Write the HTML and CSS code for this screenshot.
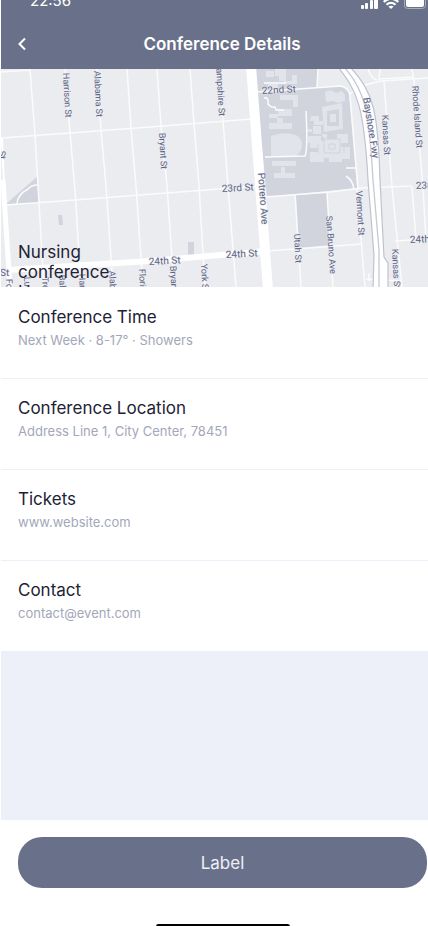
FILE: index.html
```html
<!DOCTYPE html>
<html lang="en">
<head>
<meta charset="utf-8">
<meta name="viewport" content="width=device-width, initial-scale=1">
<title>Conference Details</title>
<link rel="stylesheet" href="styles.css">
</head>
<body>
<div class="screen">
  <header class="header">
    <div class="status">
      <span class="clock">22:56</span>
      <svg class="indicators" width="68" height="14" viewBox="0 0 68 14" aria-hidden="true">
        <g fill="#fff">
          <rect x="1" y="9" width="3" height="4" rx="1"/>
          <rect x="5" y="7" width="3" height="6" rx="1"/>
          <rect x="10" y="4" width="3" height="9" rx="1"/>
          <rect x="14" y="1" width="4" height="12" rx="1"/>
          <path d="M23 5.200Q31-2 39 5.200L37.500 6.700Q31 1 24.500 6.700ZM25.700 7.900Q31 3.500 36.300 7.900L34.700 9.500Q31 6.600 27.300 9.500ZM28.400 10.600Q31 8.700 33.600 10.600L31 13Z"/>
          <rect x="46" y="2" width="18" height="9" rx="2"/>
        </g>
        <rect x="44.500" y="0.500" width="21" height="12" rx="3" fill="none" stroke="#a9aebd"/>
      </svg>
    </div>
    <div class="nav">
      <button class="back" type="button" aria-label="Back">
        <svg width="10" height="14" viewBox="0 0 10 14" fill="none" stroke="#fff" stroke-width="2"><path d="M8 1.500L2.500 7L8 12.500"/></svg>
      </button>
      <h1 class="title">Conference Details</h1>
    </div>
  </header>

  <section class="map">
    <svg class="streets" viewBox="1 69 427 218" preserveAspectRatio="xMidYMid slice" aria-label="Street map">
      <rect x="1" y="69" width="427" height="218" fill="#ebecf0"/>
      <g fill="#d1d4dd">
        <path d="M254 69H318L317 88L342 86L349 92L357 188L267 197Z"/>
        <path d="M296 195L327 193L330 245L299 248Z"/>
        <path d="M6 204L38 176V203Z"/>
        <path d="M58 215h4l1 10h-4ZM188 242h6v13h-6Z"/>
      </g>
      <g fill="#e1e4ea">
        <path d="M266 71h8v6h-8ZM275 69h11v12h-7v-5h-4ZM292 75h5v9h-13v-3h8ZM268 84h10v4h-10ZM280 95h18v12h-5v-7h-13ZM278 109h14v7h-14ZM269 114h9v4h-9ZM269 123h23v6h-23ZM277 118h6v5h-6ZM271 136Q284 131 296 135Q302 138 302 145Q302 153 295 156H271ZM272 161h24v5h-24ZM274 173h21v5h-21ZM281 167h4v6h-4Z"/>
        <path d="M325 92l6-2 5 3 6-2 3 4v6l-7 2-5-2-7 1Z"/>
        <path fill-rule="evenodd" d="M322 107L342 103L343 129L324 132ZM327 111V126H339V109Z"/>
        <path d="M330 114h6v8h-6ZM311 116h8v5h4v4h-9v-4h-4ZM307 129h5v3h-5ZM313 126h8v8h-8ZM308 136h13v7h-13ZM322 134h5v5h10v-5h11v9h-7v4h9v12h-8v3h-13v-4h-5v4h-14v-10h8v-4h-8v-7h14v-4h-2Z"/>
      </g>
      <g fill="none" stroke="#d1d4dd">
        <path d="M324 139h16v14h-16ZM329 144h6v5h-6ZM318 144v9M344 144v9"/>
      </g>
      <g fill="none" stroke="#fbfbfc" stroke-width="1.500">
        <path d="M1 72L30 70M30 69L35 135L44 287M65 69L70 132L75 190L81 287M97 69L101 130L106 186L113 287M127 69L131 128L136 186L143 287M157 69L161 126L167 186L174 287M190 69L194 124L199 186L205 287M220 69L223 120L228 186L236 287"/>
        <path d="M1 138L70 133L150 127L252 119M6 205L75 200L140 195L258 186M265 197L330 192L362 188L412 186M268 251L362 244M395 241L412 240"/>
        <path d="M295 195L301 287M327 193L333 287M357 188L365 287M318 69L317 87M256 92L341 86Q349 88 350 96L358 188M350 94Q356 89 365 85L381 81L428 78M368 69Q372 80 377 80M380 69L379 79L414 77M384 81L392 187L402 287M412 69L414 80L423 188L426 240M412 187L416 240M366 279L401 281M369 281V273M346 168h10M346 176Q353 180 354 190"/>
        <path d="M265 157L305 156Q308 150 306 111M264 98Q269 97 268 104Q271 108 275 107L276 110H284M264 83H286M17 204Q17 195 28 189Q31 185 38 185"/>
      </g>
      <g fill="none" stroke="#fff">
        <path d="M3 180L10 287" stroke-width="5"/>
        <path d="M2 138L4 185" stroke-width="2"/>
        <path d="M8 270L150 261L267 251" stroke-width="6"/>
        <path d="M251 66L260 185L268 290" stroke-width="10"/>
      </g>
      <path d="M338 67C357 91 364 105 368 180L374 255L373 290H388V263L384 257L380 180C378 111 374 93 350 67Z" fill="#fff" stroke="#bfc3cf" stroke-width="1.200"/>
      <path d="M345 68C365 91 369 110 373 180L379 250V290" fill="none" stroke="#c5c9d5" stroke-width="1.300"/>
      <g class="street-names">
        <text transform="translate(262 94) rotate(-3)">22nd St</text>
        <text transform="translate(222 192) rotate(-3)">23rd St</text>
        <text transform="translate(149 265) rotate(-3)">24th St</text>
        <text transform="translate(226 258) rotate(-3)">24th St</text>
        <text transform="translate(258 173) rotate(86)">Potrero Ave</text>
        <text transform="translate(363 98) rotate(81)">Bayshore Fwy</text>
        <text transform="translate(416 189) rotate(-2)">23rd St</text>
        <text transform="translate(410 243) rotate(-2)">24th St</text>
        <text transform="translate(0 276)">St</text>
      </g>
      <g class="street-names minor">
        <text transform="translate(63 73) rotate(87)">Harrison St</text>
        <text transform="translate(94 71) rotate(87)">Alabama St</text>
        <text transform="translate(159 133) rotate(87)">Bryant St</text>
        <text transform="translate(216 62) rotate(87)">Hampshire St</text>
        <text transform="translate(382 115) rotate(87)">Kansas St</text>
        <text transform="translate(412 86) rotate(86)">Rhode Island St</text>
        <text transform="translate(356 191) rotate(87)">Vermont St</text>
        <text transform="translate(326 216) rotate(86)">San Bruno Ave</text>
        <text transform="translate(294 234) rotate(87)">Utah St</text>
        <text transform="translate(392 249) rotate(87)">Kansas St</text>
        <text transform="translate(-1 151) rotate(87)">St</text>
        <text transform="translate(6 279) rotate(87)">Folsom St</text>
        <text transform="translate(24 277) rotate(87)">Lucky St</text>
        <text transform="translate(42 277) rotate(87)">Treat Ave</text>
        <text transform="translate(59 275) rotate(87)">Balmy St</text>
        <text transform="translate(79 274) rotate(87)">Harrison St</text>
        <text transform="translate(109 271) rotate(87)">Alabama St</text>
        <text transform="translate(139 269) rotate(87)">Florida St</text>
        <text transform="translate(170 266) rotate(87)">Bryant St</text>
        <text transform="translate(201 264) rotate(87)">York St</text>
      </g>
    </svg>
    <p class="place">Nursing<br>conference<br>Ho</p>
  </section>

  <main class="details">
    <section class="item"><h2>Conference Time</h2><p>Next Week · 8-17° · Showers</p></section>
    <section class="item"><h2>Conference Location</h2><p>Address Line 1, City Center, 78451</p></section>
    <section class="item"><h2>Tickets</h2><p>www.website.com</p></section>
    <section class="item"><h2>Contact</h2><p>contact@event.com</p></section>
  </main>

  <footer class="footer">
    <button class="action" type="button">Label</button>
    <div class="home"></div>
  </footer>
</div>
</body>
</html>
```
FILE: styles.css
```css
* { box-sizing: border-box; }
body { margin: 0; background: #fff; font-family: Inter, sans-serif; color: #1e2236; }
h1, h2, p { margin: 0; font-weight: 400; }
button { border: 0; font: inherit; color: #fff; }
.screen { display: flex; flex-direction: column; height: 100vh; min-height: 720px; margin-left: 1px; overflow: hidden; background: #edf0f9; }
.header { flex: none; background: #697089; color: #fff; overflow: hidden; }
.status { display: flex; justify-content: space-between; align-items: flex-end; height: 20px; margin-top: -10px; padding-left: 29px; }
.clock { font-size: 15px; line-height: 18px; }
.indicators { flex: none; }
.nav { display: grid; grid-template-columns: 42px 1fr 27px; align-items: center; height: 59px; padding-bottom: 10px; padding-top: 18px; }
.back { display: flex; justify-content: center; padding: 8px; background: transparent; }
.title { text-align: center; font-size: 17px; line-height: 24px; font-weight: 600; }
.map { flex: none; position: relative; height: 218px; overflow: hidden; }
.streets { display: block; width: 100%; height: 100%; }
.street-names { font-family: Roboto, sans-serif; font-size: 10px; fill: #5d6585; stroke: #ebecf0; stroke-width: 1px; paint-order: stroke; text-rendering: geometricPrecision; }
.minor { font-size: 9px; }
.place { position: absolute; left: 17px; top: 173px; font-size: 17px; line-height: 20px; }
.details { flex: none; padding-top: 1px; background: #fff; }
.item { height: 91px; padding: 17px 17px 0; border-bottom: 1px solid #edf0f9; }
.item h2 { font-size: 17px; line-height: 24px; }
.item p { margin-top: 1px; font-size: 13px; line-height: 20px; color: #a3a7b9; }
.footer { display: flex; flex-direction: column; flex: none; height: 106px; margin-top: auto; padding: 17px 1px 0 17px; background: #fff; }
.action { flex: none; width: 100%; height: 51px; border-radius: 24px; background: #697089; color: #edf0f9; font-size: 17px; }
.home { width: 134px; height: 5px; margin: 36px auto 0; flex: none; border-radius: 3px; background: #000; }
```
